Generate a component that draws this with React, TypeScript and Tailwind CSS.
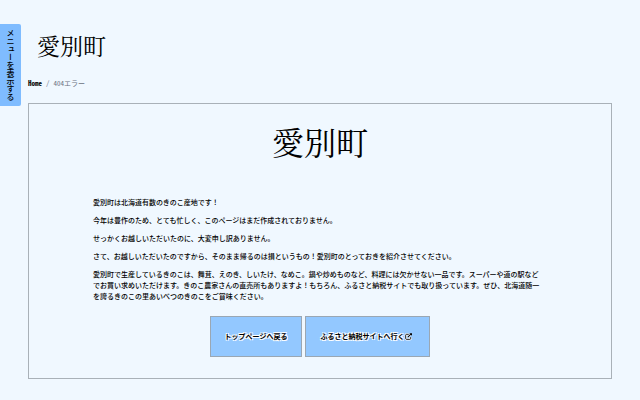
import React from 'react';

const paragraphs = [
  '愛別町は北海道有数のきのこ産地です！',
  '今年は豊作のため、とても忙しく、このページはまだ作成されておりません。',
  'せっかくお越しいただいたのに、大変申し訳ありません。',
  'さて、お越しいただいたのですから、そのまま帰るのは損というもの！愛別町のとっておきを紹介させてください。',
  '愛別町で生産しているきのこは、舞茸、えのき、しいたけ、なめこ。鍋や炒めものなど、料理には欠かせない一品です。スーパーや道の駅などでお買い求めいただけます。きのこ農家さんの直売所もありますよ！もちろん、ふるさと納税サイトでも取り扱っています。ぜひ、北海道随一を誇るきのこの里あいべつのきのこをご賞味ください。',
];

const ExternalIcon: React.FC = () => (
  <svg viewBox="0 0 16 16" className="mr-[3px] h-[7px] w-[7px] overflow-visible" aria-hidden="true">
    <g fill="none" stroke="#fff" strokeWidth="5" strokeLinejoin="round">
      <path d="M8.5 3H3.5A2 2 0 0 0 1.5 5v7.5a2 2 0 0 0 2 2H11a2 2 0 0 0 2-2V9.5" />
      <path d="M6.5 9.5 13.5 2.5" />
    </g>
    <g fill="none" stroke="#000" strokeWidth="2">
      <path d="M8.5 3H3.5A2 2 0 0 0 1.5 5v7.5a2 2 0 0 0 2 2H11a2 2 0 0 0 2-2V9.5" />
      <path d="M6.5 9.5 13.5 2.5" strokeWidth="2.4" />
    </g>
    <path d="M10 0.5h6v6z" fill="#000" />
  </svg>
);

interface ActionLinkProps {
  href: string;
  label: string;
  external?: boolean;
}

const ActionLink: React.FC<ActionLinkProps> = ({ href, label, external }) => (
  <a
    href={href}
    className="flex items-center gap-px border border-[#9aa7b3] bg-[#93c8ff] px-[14px] py-[14px] font-bold text-black [text-shadow:1px_1px_0_#fff,-1px_-1px_0_#fff,1px_-1px_0_#fff,-1px_1px_0_#fff]"
  >
    {label}
    {external && <ExternalIcon />}
  </a>
);

const App: React.FC = () => {
  return (
    <div className="min-h-screen bg-[#f0f8ff] font-['Noto_Sans_CJK_JP',sans-serif] text-[7px] leading-[11px] text-black">
      <button
        type="button"
        className="fixed top-6 left-0 flex w-[21px] justify-center rounded-r-xs bg-[#7fbcff] py-[5px] text-[8px] leading-[11px] font-medium"
      >
        <span className="[writing-mode:vertical-rl]">メニューを表示する</span>
      </button>

      <header className="px-[37px] pt-[30px]">
        <a href="#" className="inline-block font-['Noto_Serif_CJK_JP','Noto_Sans_CJK_JP',serif] text-[23px] leading-8">愛別町</a>
      </header>

      <nav aria-label="breadcrumb" className="mt-4 px-7 font-['Noto_Sans_Mono_CJK_JP','Noto_Sans_CJK_JP',monospace]">
        <ol className="flex gap-1">
          <li><a href="#" className="font-bold">Home</a></li>
          <li className="text-gray-500" aria-hidden="true">/</li>
          <li className="text-gray-500">404エラー</li>
        </ol>
      </nav>

      <main className="mx-7 mt-[14px] border border-[#a9b1b8] px-16 pb-[21px]">
        <h1 className="pt-[13px] text-center font-['Noto_Serif_CJK_JP','Noto_Sans_CJK_JP',serif] text-[32px] leading-[48px]">愛別町</h1>
        <div className="mt-8 flex flex-col gap-[7px] pr-1 font-medium">
          {paragraphs.map((text) => (
            <p key={text}>{text}</p>
          ))}
        </div>
        <div className="mt-[14px] flex justify-center gap-[3px]">
          <ActionLink href="#" label="トップページへ戻る" />
          <ActionLink href="#" label="ふるさと納税サイトへ行く" external />
        </div>
      </main>
    </div>
  );
};

export default App;
